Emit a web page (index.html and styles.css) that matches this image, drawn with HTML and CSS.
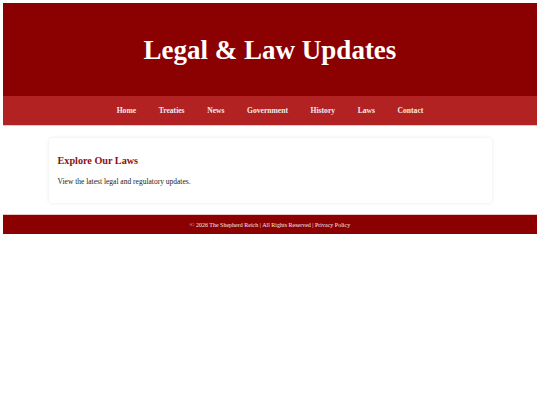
FILE: index.html
```html
<!DOCTYPE html>
<html lang="en">
<head>
<meta charset="utf-8">
<title>Legal &amp; Law Updates</title>
<link rel="stylesheet" href="styles.css">
</head>
<body>
<header class="site-header">
  <div class="banner">
    <h1 class="title">Legal &amp; Law Updates</h1>
  </div>
  <nav class="nav">
    <a href="#">Home</a>
    <a href="#">Treaties</a>
    <a href="#">News</a>
    <a href="#">Government</a>
    <a href="#">History</a>
    <a href="#">Laws</a>
    <a href="#">Contact</a>
  </nav>
</header>
<main class="content">
  <section class="card">
    <h2 class="card-title">Explore Our Laws</h2>
    <p class="card-text">View the latest legal and regulatory updates.</p>
  </section>
</main>
<footer class="site-footer">
  <p>&copy; 2026 The Shepherd Reich | All Rights Reserved | Privacy Policy</p>
</footer>
</body>
</html>
```
FILE: styles.css
```css
html, body {
  background: #ffffff;
}
body {
  margin: 3px;
  font-family: "Liberation Serif", "Times New Roman", serif;
  color: #222;
}
.site-header {
  box-shadow: 0 0 0 1px rgba(200, 80, 80, 0.35);
}
.banner {
  background: #8b0000;
  height: 93px;
  display: flex;
  align-items: center;
  justify-content: center;
}
.title {
  margin: 0;
  color: #ffffff;
  font-size: 27px;
  font-weight: bold;
  line-height: 1;
  padding-top: 2px;
}
.nav {
  background: #b22222;
  height: 29px;
  display: flex;
  align-items: center;
  justify-content: center;
}
.nav a {
  color: #f4eaea;
  text-decoration: none;
  font-weight: bold;
  font-size: 7.6px;
  padding: 0 11.3px;
  line-height: 1;
}
.content {
  padding: 13px 45px 12px 45px;
}
.card {
  max-width: 425px;
  margin: 0 auto;
  background: #fff;
  border-radius: 4px;
  box-shadow: 0 0 4px rgba(0, 0, 0, 0.09);
  padding: 17px 9px 17px 9px;
}
.card-title {
  margin: 0;
  color: #8b1010;
  font-size: 10.2px;
  line-height: 12px;
  font-weight: bold;
}
.card-text {
  margin: 10px 0 0 0;
  font-size: 7.5px;
  line-height: 9px;
  color: #222;
}
.site-footer {
  background: #8b0000;
  height: 19px;
  display: flex;
  align-items: center;
  justify-content: center;
  box-shadow: 0 0 0 1px rgba(200, 80, 80, 0.35);
}
.site-footer p {
  margin: 0;
  color: #f4eaea;
  font-size: 6px;
  line-height: 1;
}
```
